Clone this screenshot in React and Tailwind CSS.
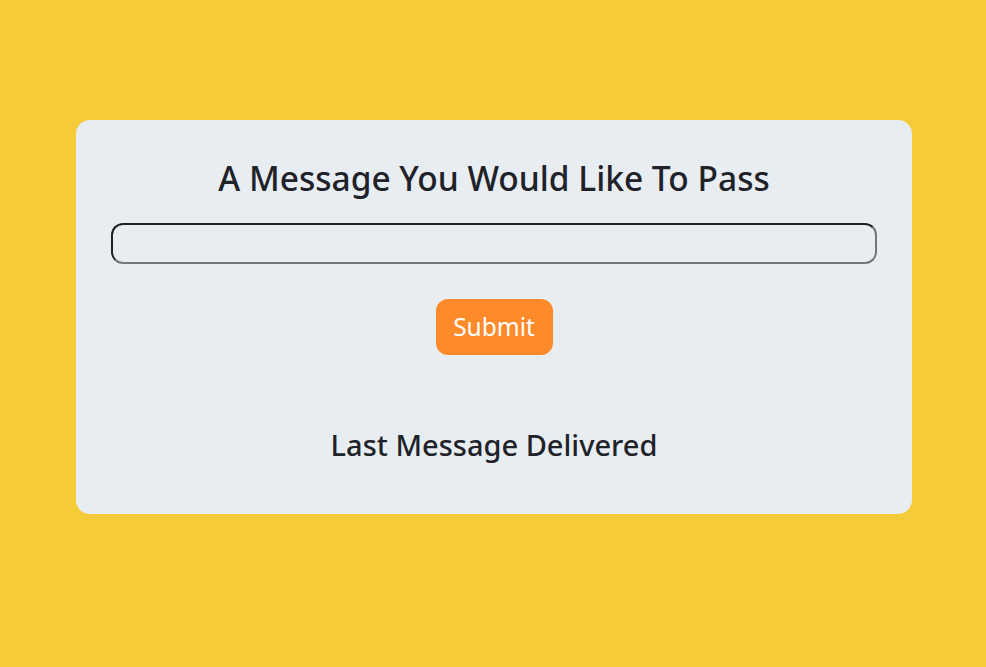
import React from "react";

export default function App() {
  return (
    <div className="min-h-screen bg-[#f5cb3a] pt-[120px] font-['Noto_Sans',sans-serif] text-[#1f2329]">
      <div className="ml-[76px] flex h-[394px] w-[836px] flex-col items-center rounded-[14px] bg-[#e8edf2] px-[35px] pt-[35px]">
        <h1 className="text-[33.5px] font-medium leading-[46px]">A Message You Would Like To Pass</h1>
        <input
          type="text"
          className="mt-[22px] h-[41px] w-full rounded-[12px] border-2 bg-transparent px-3 [border-style:inset] border-[#767676] outline-none"
        />
        <button className="mt-[35px] h-[56px] w-[117px] rounded-[12px] bg-[#ff8a2a] text-[24.5px] text-white">
          Submit
        </button>
        <h2 className="mt-[70px] text-[29px] font-medium leading-[40px]">Last Message Delivered</h2>
      </div>
    </div>
  );
}
